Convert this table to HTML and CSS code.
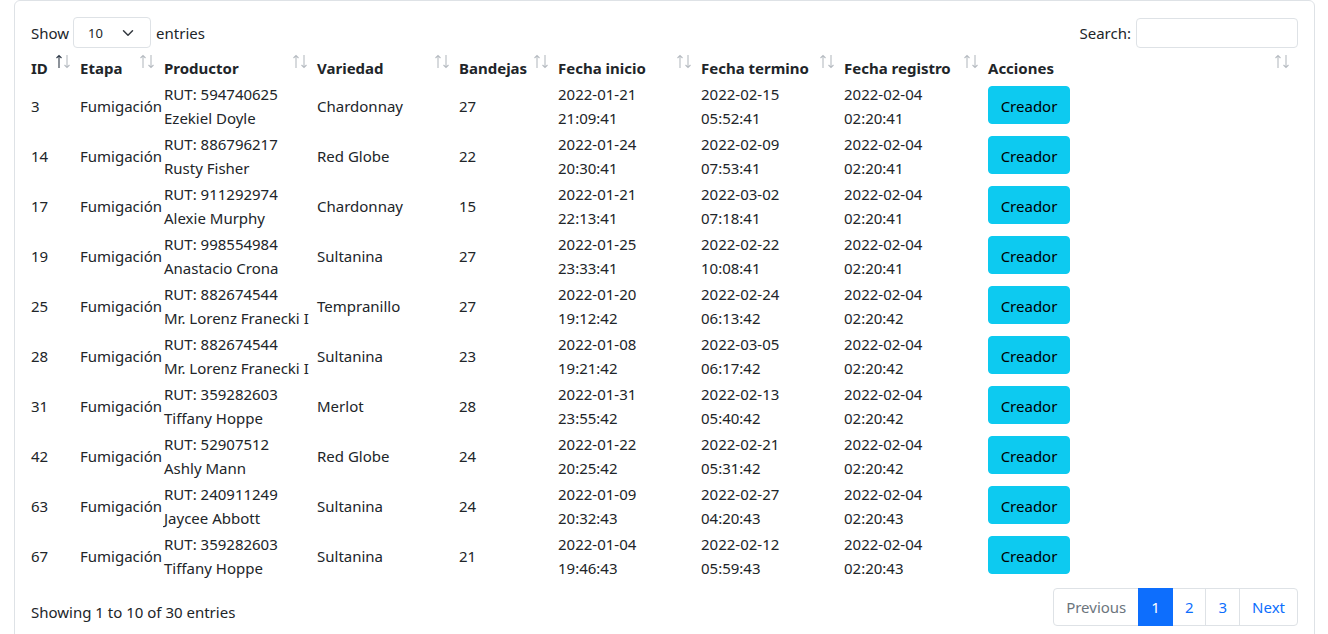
FILE: index.html
```html
<!DOCTYPE html>
<html lang="es">
<head>
<meta charset="utf-8">
<title>Fumigación</title>
<link rel="stylesheet" href="styles.css">
</head>
<body>
<div class="card">
  <div class="topbar">
    <label class="length">Show
      <span class="select">10
        <svg width="12" height="12" viewBox="0 0 16 16"><path d="M2 5l6 6 6-6" fill="none" stroke="#343a40" stroke-width="2" stroke-linecap="round" stroke-linejoin="round"/></svg>
      </span>
      entries</label>
    <label class="search">Search: <span class="input"></span></label>
  </div>

  <table class="dt">
    <colgroup>
      <col class="c1"><col class="c2"><col class="c3"><col class="c4"><col class="c5"><col class="c6"><col class="c7"><col class="c8"><col class="c9">
    </colgroup>
    <thead>
      <tr>
        <th>ID<span class="sort asc"><svg viewBox="0 0 16 15"><path class="up" d="M4 14V1.5M1.5 4L4 1.5 6.5 4"/><path class="down" d="M12 1v12.5M9.5 11L12 13.5 14.5 11"/></svg></span></th>
        <th>Etapa<span class="sort"><svg viewBox="0 0 16 15"><path class="up" d="M4 14V1.5M1.5 4L4 1.5 6.5 4"/><path class="down" d="M12 1v12.5M9.5 11L12 13.5 14.5 11"/></svg></span></th>
        <th>Productor<span class="sort"><svg viewBox="0 0 16 15"><path class="up" d="M4 14V1.5M1.5 4L4 1.5 6.5 4"/><path class="down" d="M12 1v12.5M9.5 11L12 13.5 14.5 11"/></svg></span></th>
        <th>Variedad<span class="sort"><svg viewBox="0 0 16 15"><path class="up" d="M4 14V1.5M1.5 4L4 1.5 6.5 4"/><path class="down" d="M12 1v12.5M9.5 11L12 13.5 14.5 11"/></svg></span></th>
        <th>Bandejas<span class="sort"><svg viewBox="0 0 16 15"><path class="up" d="M4 14V1.5M1.5 4L4 1.5 6.5 4"/><path class="down" d="M12 1v12.5M9.5 11L12 13.5 14.5 11"/></svg></span></th>
        <th>Fecha inicio<span class="sort"><svg viewBox="0 0 16 15"><path class="up" d="M4 14V1.5M1.5 4L4 1.5 6.5 4"/><path class="down" d="M12 1v12.5M9.5 11L12 13.5 14.5 11"/></svg></span></th>
        <th>Fecha termino<span class="sort"><svg viewBox="0 0 16 15"><path class="up" d="M4 14V1.5M1.5 4L4 1.5 6.5 4"/><path class="down" d="M12 1v12.5M9.5 11L12 13.5 14.5 11"/></svg></span></th>
        <th>Fecha registro<span class="sort"><svg viewBox="0 0 16 15"><path class="up" d="M4 14V1.5M1.5 4L4 1.5 6.5 4"/><path class="down" d="M12 1v12.5M9.5 11L12 13.5 14.5 11"/></svg></span></th>
        <th>Acciones<span class="sort"><svg viewBox="0 0 16 15"><path class="up" d="M4 14V1.5M1.5 4L4 1.5 6.5 4"/><path class="down" d="M12 1v12.5M9.5 11L12 13.5 14.5 11"/></svg></span></th>
      </tr>
    </thead>
    <tbody>
      <tr><td>3</td><td>Fumigación</td><td>RUT: 594740625<br>Ezekiel Doyle</td><td>Chardonnay</td><td>27</td><td>2022-01-21<br>21:09:41</td><td>2022-02-15<br>05:52:41</td><td>2022-02-04<br>02:20:41</td><td><button class="btn">Creador</button></td></tr>
      <tr><td>14</td><td>Fumigación</td><td>RUT: 886796217<br>Rusty Fisher</td><td>Red Globe</td><td>22</td><td>2022-01-24<br>20:30:41</td><td>2022-02-09<br>07:53:41</td><td>2022-02-04<br>02:20:41</td><td><button class="btn">Creador</button></td></tr>
      <tr><td>17</td><td>Fumigación</td><td>RUT: 911292974<br>Alexie Murphy</td><td>Chardonnay</td><td>15</td><td>2022-01-21<br>22:13:41</td><td>2022-03-02<br>07:18:41</td><td>2022-02-04<br>02:20:41</td><td><button class="btn">Creador</button></td></tr>
      <tr><td>19</td><td>Fumigación</td><td>RUT: 998554984<br>Anastacio Crona</td><td>Sultanina</td><td>27</td><td>2022-01-25<br>23:33:41</td><td>2022-02-22<br>10:08:41</td><td>2022-02-04<br>02:20:41</td><td><button class="btn">Creador</button></td></tr>
      <tr><td>25</td><td>Fumigación</td><td>RUT: 882674544<br>Mr. Lorenz Franecki I</td><td>Tempranillo</td><td>27</td><td>2022-01-20<br>19:12:42</td><td>2022-02-24<br>06:13:42</td><td>2022-02-04<br>02:20:42</td><td><button class="btn">Creador</button></td></tr>
      <tr><td>28</td><td>Fumigación</td><td>RUT: 882674544<br>Mr. Lorenz Franecki I</td><td>Sultanina</td><td>23</td><td>2022-01-08<br>19:21:42</td><td>2022-03-05<br>06:17:42</td><td>2022-02-04<br>02:20:42</td><td><button class="btn">Creador</button></td></tr>
      <tr><td>31</td><td>Fumigación</td><td>RUT: 359282603<br>Tiffany Hoppe</td><td>Merlot</td><td>28</td><td>2022-01-31<br>23:55:42</td><td>2022-02-13<br>05:40:42</td><td>2022-02-04<br>02:20:42</td><td><button class="btn">Creador</button></td></tr>
      <tr><td>42</td><td>Fumigación</td><td>RUT: 52907512<br>Ashly Mann</td><td>Red Globe</td><td>24</td><td>2022-01-22<br>20:25:42</td><td>2022-02-21<br>05:31:42</td><td>2022-02-04<br>02:20:42</td><td><button class="btn">Creador</button></td></tr>
      <tr><td>63</td><td>Fumigación</td><td>RUT: 240911249<br>Jaycee Abbott</td><td>Sultanina</td><td>24</td><td>2022-01-09<br>20:32:43</td><td>2022-02-27<br>04:20:43</td><td>2022-02-04<br>02:20:43</td><td><button class="btn">Creador</button></td></tr>
      <tr><td>67</td><td>Fumigación</td><td>RUT: 359282603<br>Tiffany Hoppe</td><td>Sultanina</td><td>21</td><td>2022-01-04<br>19:46:43</td><td>2022-02-12<br>05:59:43</td><td>2022-02-04<br>02:20:43</td><td><button class="btn">Creador</button></td></tr>
    </tbody>
  </table>

  <div class="footer">
    <div class="info">Showing 1 to 10 of 30 entries</div>
    <ul class="pagination">
      <li class="page disabled">Previous</li>
      <li class="page active">1</li>
      <li class="page">2</li>
      <li class="page">3</li>
      <li class="page">Next</li>
    </ul>
  </div>
</div>
</body>
</html>
```

FILE: styles.css
```css
* { box-sizing: border-box; }
html, body {
  margin: 0;
  background: #fff;
}
body {
  font-family: "Noto Sans", "Liberation Sans", sans-serif;
  font-size: 15px;
  line-height: 24px;
  color: #212529;
  padding-left: 14px;
  padding-right: 13px;
  height: 634px;
  overflow: hidden;
}
.card {
  border: 1px solid #dee2e6;
  border-radius: 6px;
  padding: 16px 16px 0 16px;
  height: 660px;
}
.topbar {
  display: flex;
  justify-content: space-between;
  align-items: center;
  height: 31px;
}
.length, .search {
  display: flex;
  align-items: center;
  gap: 4px;
}
.search { gap: 5px; }
.select {
  display: inline-flex;
  align-items: center;
  justify-content: space-between;
  width: 78px;
  height: 31px;
  border: 1px solid #dee2e6;
  border-radius: 4px;
  padding: 0 16px 0 14px;
  font-size: 13px;
  margin: 0 1px 0 0;
}
.input {
  display: inline-block;
  width: 162px;
  height: 30px;
  border: 1px solid #dee2e6;
  border-radius: 4px;
}
table.dt {
  margin-top: 8px;
  margin-left: -1px;
  width: 1268px;
  table-layout: fixed;
  border-collapse: collapse;
}
.c1 { width: 49px; }
.c2 { width: 84px; }
.c3 { width: 153px; }
.c4 { width: 142px; }
.c5 { width: 99px; }
.c6 { width: 143px; }
.c7 { width: 143px; }
.c8 { width: 144px; }
.c9 { width: 311px; }
th {
  position: relative;
  text-align: left;
  font-weight: 700;
  padding: 0 1px 1px 1px;
  height: 25px;
  white-space: nowrap;
}
.sort {
  position: absolute;
  right: 8px;
  top: -2px;
  width: 16px;
  height: 15px;
}
.sort svg {
  display: block;
  width: 16px;
  height: 15px;
  fill: none;
  stroke-width: 1.1;
}
.sort .up, .sort .down { stroke: #b7bcc2; }
.sort.asc .up { stroke: #2f3a48; }
td {
  padding: 1px 1px;
  height: 50px;
  vertical-align: middle;
  white-space: nowrap;
  overflow: hidden;
}
.btn {
  font: inherit;
  color: #000;
  background: #0dcaf0;
  border: 1px solid #0dcaf0;
  border-radius: 4px;
  width: 82px;
  height: 38px;
  padding: 2px 0 0 0;
  margin: 0 0 2px 0;
  cursor: pointer;
}
.footer {
  display: flex;
  justify-content: space-between;
  align-items: flex-start;
  margin-top: 7px;
}
.info {
  padding-top: 12px;
}
.pagination {
  display: flex;
  list-style: none;
  margin: 0;
  padding: 0;
}
.page {
  height: 38px;
  line-height: 36px;
  padding: 0 12px;
  border: 1px solid #dee2e6;
  margin-left: -1px;
  color: #0d6efd;
  min-width: 34px;
  text-align: center;
}
.page:first-child {
  border-radius: 4px 0 0 4px;
  margin-left: 0;
}
.page:last-child {
  border-radius: 0 4px 4px 0;
}
.page.disabled { color: #6c757d; }
.page.active {
  background: #0d6efd;
  border-color: #0d6efd;
  color: #fff;
  position: relative;
}
```
